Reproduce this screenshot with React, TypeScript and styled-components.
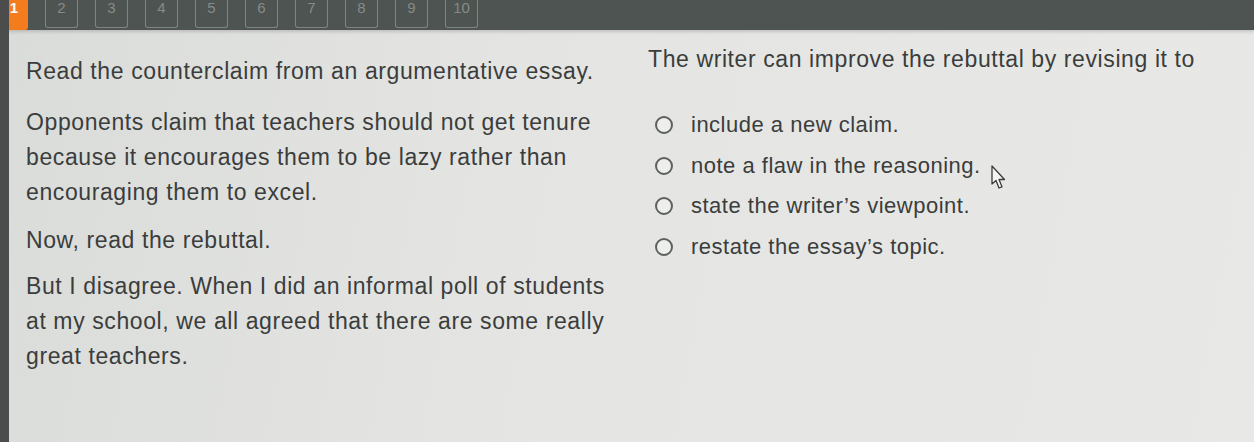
import styled, { createGlobalStyle } from "styled-components";

const Global = createGlobalStyle`
	html, body {
		margin: 0;
		padding: 0;
		background: #e3e4e2;
	}
	body {
		font-family: "Liberation Sans", Arial, sans-serif;
		color: #3d3f3e;
	}
`;

const Page = styled.div`
	width: 1254px;
	height: 442px;
	overflow: hidden;
	display: flex;
	flex-direction: column;
	background: linear-gradient(100deg, #dadcda 0%, #e4e5e3 40%, #e8e9e7 100%);
	border-left: 9px solid #4a4d4c;
	box-sizing: border-box;
`;

const TopBar = styled.div`
	height: 28px;
	flex: none;
	background: #4e5451;
	display: flex;
	align-items: flex-end;
	gap: 17px;
	padding-bottom: 2px;
	margin-left: -9px;
	box-shadow: 0 2px 3px rgba(0, 0, 0, 0.15);
`;

const Tab = styled.div<{ $active?: boolean }>`
	width: ${p => (p.$active ? "28px" : "33px")};
	height: ${p => (p.$active ? "30px" : "28px")};
	margin-bottom: ${p => (p.$active ? "-2px" : "0")};
	box-sizing: border-box;
	border: ${p => (p.$active ? "none" : "1px solid #7f8582")};
	border-top: none;
	border-radius: 0 0 3px 3px;
	background: ${p => (p.$active ? "#f37c1c" : "transparent")};
	color: ${p => (p.$active ? "#fff" : "#868b88")};
	font-size: 15px;
	font-weight: ${p => (p.$active ? 700 : 400)};
	display: flex;
	justify-content: center;
	align-items: flex-start;
	line-height: 1;
	margin-top: -7px;
`;

const Body = styled.div`
	flex: 1;
	display: grid;
	grid-template-columns: 627px 1fr;
`;

const Left = styled.div`
	padding: 24px 0 0 17px;
	max-width: 585px;
`;

const Right = styled.div`
	padding: 12px 0 0 12px;
`;

const Para = styled.p<{ $gap?: number }>`
	margin: 0 0 ${p => p.$gap ?? 10}px;
	font-size: 23px;
	line-height: 35px;
	letter-spacing: 0.6px;
	color: #3b3d3c;
`;

const Options = styled.div`
	display: flex;
	flex-direction: column;
	margin-top: 28px;
	padding-left: 7px;
`;

const Option = styled.label`
	display: flex;
	align-items: center;
	gap: 18px;
	height: 40.5px;
	font-size: 22px;
	color: #3b3d3c;
	letter-spacing: 0.5px;
	position: relative;
`;

const Radio = styled.span`
	width: 18px;
	height: 18px;
	border-radius: 50%;
	border: 2px solid #5c605e;
	box-sizing: border-box;
	background: #eeefed;
	flex: none;
`;

const Cursor = styled.svg`
	position: absolute;
	left: 335px;
	top: 19px;
`;

const tabs = [1, 2, 3, 4, 5, 6, 7, 8, 9, 10];

export default function App() {
	return (
		<>
			<Global />
			<Page>
				<TopBar>
					{tabs.map(n => (
						<Tab key={n} $active={n === 1}>
							{n}
						</Tab>
					))}
				</TopBar>
				<Body>
					<Left>
						<Para $gap={16}>Read the counterclaim from an argumentative essay.</Para>
						<Para $gap={13}>
							Opponents claim that teachers should not get tenure because it
							encourages them to be lazy rather than encouraging them to excel.
						</Para>
						<Para $gap={11}>Now, read the rebuttal.</Para>
						<Para>
							But I disagree. When I did an informal poll of students at my
							school, we all agreed that there are some really great teachers.
						</Para>
					</Left>
					<Right>
						<Para>The writer can improve the rebuttal by revising it to</Para>
						<Options>
							<Option>
								<Radio />
								include a new claim.
							</Option>
							<Option>
								<Radio />
								note a flaw in the reasoning.
								<Cursor width="18" height="26" viewBox="0 0 18 26">
									<path
										d="M2 1 L2 19 L6 15.5 L9 23 L12 21.8 L9 14.5 L14.5 14.5 Z"
										fill="#f4f5f3"
										stroke="#3b3d3c"
										strokeWidth="1.3"
										strokeLinejoin="round"
									/>
								</Cursor>
							</Option>
							<Option>
								<Radio />
								state the writer’s viewpoint.
							</Option>
							<Option>
								<Radio />
								restate the essay’s topic.
							</Option>
						</Options>
					</Right>
				</Body>
			</Page>
		</>
	);
}
